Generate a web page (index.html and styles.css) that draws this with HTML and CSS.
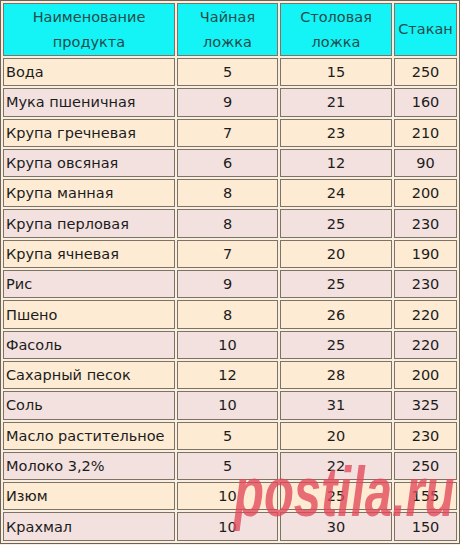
FILE: index.html
```html
<!DOCTYPE html>
<html lang="ru">
<head>
<meta charset="utf-8">
<link rel="stylesheet" href="styles.css">
</head>
<body>
<div class="wrap">
<table class="tbl">
  <colgroup>
    <col class="c1"><col class="c2"><col class="c3"><col class="c4">
  </colgroup>
  <thead>
    <tr class="head">
      <th>Наименование<br>продукта</th>
      <th>Чайная<br>ложка</th>
      <th>Столовая<br>ложка</th>
      <th>Стакан</th>
    </tr>
  </thead>
  <tbody>
    <tr class="odd"><td class="name">Вода</td><td>5</td><td>15</td><td>250</td></tr>
    <tr class="even"><td class="name">Мука пшеничная</td><td>9</td><td>21</td><td>160</td></tr>
    <tr class="odd"><td class="name">Крупа гречневая</td><td>7</td><td>23</td><td>210</td></tr>
    <tr class="even"><td class="name">Крупа овсяная</td><td>6</td><td>12</td><td>90</td></tr>
    <tr class="odd"><td class="name">Крупа манная</td><td>8</td><td>24</td><td>200</td></tr>
    <tr class="even"><td class="name">Крупа перловая</td><td>8</td><td>25</td><td>230</td></tr>
    <tr class="odd"><td class="name">Крупа ячневая</td><td>7</td><td>20</td><td>190</td></tr>
    <tr class="even"><td class="name">Рис</td><td>9</td><td>25</td><td>230</td></tr>
    <tr class="odd"><td class="name">Пшено</td><td>8</td><td>26</td><td>220</td></tr>
    <tr class="even"><td class="name">Фасоль</td><td>10</td><td>25</td><td>220</td></tr>
    <tr class="odd"><td class="name">Сахарный песок</td><td>12</td><td>28</td><td>200</td></tr>
    <tr class="even"><td class="name">Соль</td><td>10</td><td>31</td><td>325</td></tr>
    <tr class="odd"><td class="name">Масло растительное</td><td>5</td><td>20</td><td>230</td></tr>
    <tr class="even"><td class="name">Молоко 3,2%</td><td>5</td><td>22</td><td>250</td></tr>
    <tr class="odd"><td class="name">Изюм</td><td>10</td><td>25</td><td>155</td></tr>
    <tr class="even"><td class="name">Крахмал</td><td>10</td><td>30</td><td>150</td></tr>
  </tbody>
</table>
<div class="watermark">postila.ru</div>
</div>
</body>
</html>
```
FILE: styles.css
```css
html, body {
  margin: 0;
  padding: 0;
  background: #f7efe2;
}
.wrap {
  position: relative;
  width: 460px;
  height: 545px;
  overflow: hidden;
}
.tbl {
  width: 460px;
  table-layout: fixed;
  border-collapse: separate;
  border-spacing: 2px;
  border: 1px solid #6f6353;
  font-family: "DejaVu Sans", sans-serif;
  font-size: 14.5px;
  color: #1c1c1c;
}
.c1 { width: 172px; }
.c2 { width: 101px; }
.c3 { width: 112px; }
.c4 { width: 63px; }
.tbl th, .tbl td {
  border: 1px solid #7f7262;
  padding: 0;
  text-align: center;
  vertical-align: middle;
}
.head th {
  background: #14f3f6;
  color: #224c4c;
  font-weight: normal;
  font-size: 14.5px;
  line-height: 25px;
  height: 51px;
}
.tbl td {
  height: 26.3px;
}
.tbl td.name {
  text-align: left;
  padding-left: 2px;
}
.odd td { background: #fdebd3; }
.even td { background: #f3e1df; }
.watermark {
  position: absolute;
  left: 234px;
  top: 457px;
  font-family: "Liberation Sans", sans-serif;
  font-weight: bold;
  font-style: italic;
  font-size: 70px;
  color: rgba(226, 72, 90, 0.78);
  transform: scaleX(0.7);
  transform-origin: left top;
  white-space: nowrap;
  line-height: 1;
}
```
